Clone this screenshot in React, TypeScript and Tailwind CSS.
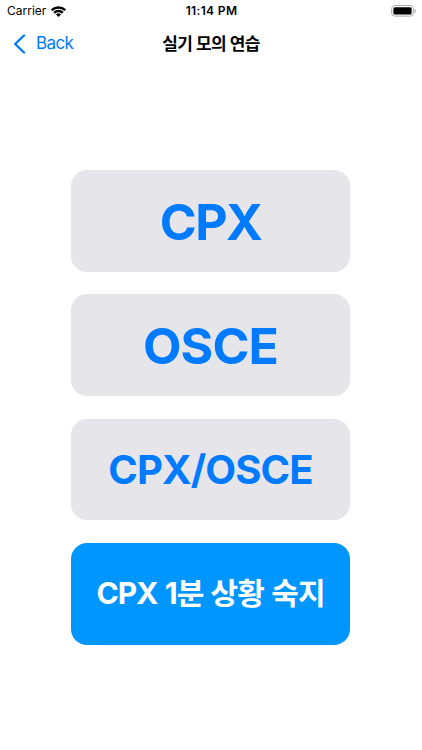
import { clsx } from "clsx";

const modes = [
  { label: "CPX",           style: "bg-[#e5e5ea] text-[#007aff]", text: "pt-0.5 text-[50px] tracking-[-1.6px]" },
  { label: "OSCE",          style: "bg-[#e5e5ea] text-[#007aff]", text: "pt-0.5 text-[50px] tracking-[-0.9px]" },
  { label: "CPX/OSCE",      style: "bg-[#e5e5ea] text-[#007aff]", text: "pt-px text-[40px] tracking-[-0.9px]" },
  { label: "CPX 1분 상황 숙지", style: "bg-[#0096ff] text-white",      text: "text-[30px] tracking-[-0.9px] [word-spacing:1px]" },
];

function StatusBar() {
  return (
    <div className="h-[22px] grid grid-cols-3 items-center pl-[7px] pr-[5px] text-[12px]">
      <div className="flex items-center gap-[5px]">
        <span>Carrier</span>
        <svg width="15" height="11" viewBox="0 0 15 11" fill="none" stroke="black" strokeWidth="2.4">
          <path d="M0.8 4.2a9.5 9.5 0 0 1 13.4 0" />
          <path d="M3.2 6.8a6 6 0 0 1 8.6 0" />
          <path d="M7.5 11 5 8.5a3.5 3.5 0 0 1 5 0z" fill="black" stroke="none" />
        </svg>
      </div>
      <span className="pr-px text-center font-semibold tracking-[0.35px]">11:14 PM</span>
      <svg className="justify-self-end" width="26" height="12" viewBox="0 0 26 12">
        <rect x="0.7" y="0.5" width="21.6" height="10.6" rx="3" fill="none" stroke="#a6a6a6" />
        <rect x="2.4" y="2.2" width="18.2" height="7.2" rx="1.5" />
        <path d="M23.6 4v4c.8-.3 1.3-1.1 1.3-2s-.5-1.7-1.3-2z" fill="#a6a6a6" />
      </svg>
    </div>
  );
}

function NavBar() {
  return (
    <header className="h-[43px] grid grid-cols-3 items-center px-[13px]">
      <button className="flex items-center gap-2.5 text-[#007aff] text-[17px] tracking-[-0.6px]">
        <svg width="13" height="20" viewBox="0 0 13 20" fill="none" stroke="currentColor" strokeWidth="2.4" strokeLinecap="round" strokeLinejoin="round">
          <path d="M11 1.5 2.2 10l8.8 8.5" />
        </svg>
        Back
      </button>
      <h1 className="pt-0.5 text-center text-[17px] font-semibold tracking-[-0.6px] whitespace-nowrap">실기 모의 연습</h1>
    </header>
  );
}

export default function App() {
  return (
    <div className="h-screen bg-white text-black overflow-hidden flex flex-col font-[Inter,'Noto_Sans_CJK_KR',sans-serif]">
      <StatusBar />
      <NavBar />

      <main className="flex-1 flex flex-col items-center gap-[22.4px] pt-[105.2px] pr-px">
        {modes.map(({ label, style, text }) => (
          <button
            key={label}
            className={clsx("w-[279px] h-[101.8px] shrink-0 rounded-[16px] font-bold whitespace-nowrap", style, text)}
          >
            {label}
          </button>
        ))}
      </main>
    </div>
  );
}
